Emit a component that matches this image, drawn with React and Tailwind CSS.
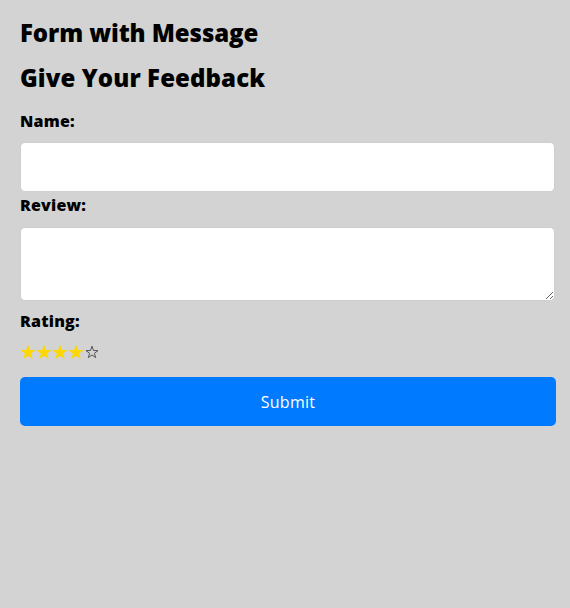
import React from "react";

function Star({ filled }) {
  if (filled) {
    return (
      <svg width="16" height="16" viewBox="0 0 16 16" className="block">
        <polygon
          points="8,0.6 9.9,6 15.6,6.1 11,9.5 12.7,15 8,11.7 3.3,15 5,9.5 0.4,6.1 6.1,6"
          fill="#FFD700"
        />
      </svg>
    );
  }
  return (
    <svg width="16" height="16" viewBox="0 0 16 16" className="block">
      <polygon
        points="8,2.2 9.5,6.5 14,6.6 10.4,9.3 11.7,13.6 8,11 4.3,13.6 5.6,9.3 2,6.6 6.5,6.5"
        fill="none"
        stroke="#555"
        strokeWidth="1"
        strokeLinejoin="round"
      />
    </svg>
  );
}

export default function App() {
  return (
    <div
      className="min-h-[608px] w-[570px] bg-[#d3d3d3] px-[20px] pt-[15px] text-black"
      style={{ fontFamily: '"Open Sans", "Noto Sans", sans-serif' }}
    >
      <h1 className="h-[36px] text-[24px] font-extrabold leading-[36px] tracking-[-0.1px]">
        Form with Message
      </h1>
      <h2 className="mt-[9px] h-[36px] text-[24px] font-extrabold leading-[36px] tracking-[0.1px]">
        Give Your Feedback
      </h2>
      <label className="mt-[13px] block h-[24px] text-[16px] font-extrabold leading-[24px] tracking-[0.2px]">
        Name:
      </label>
      <input
        type="text"
        className="mt-[9px] block h-[50px] w-[535px] rounded-[5px] border border-[#cfcfcf] bg-white px-2 outline-none"
      />
      <label className="mt-[1px] block h-[24px] text-[16px] font-extrabold leading-[24px] tracking-[0.2px]">
        Review:
      </label>
      <textarea className="mt-[10px] block h-[74px] w-[535px] resize-y rounded-[5px] border border-[#cfcfcf] bg-white px-2 outline-none" />
      <label className="mt-[8px] block h-[24px] text-[16px] font-extrabold leading-[24px] tracking-[0.2px]">
        Rating:
      </label>
      <div className="mt-[7px] flex h-[24px] items-center">
        <Star filled />
        <Star filled />
        <Star filled />
        <Star filled />
        <Star />
      </div>
      <button
        type="button"
        className="mt-[13px] block h-[49px] w-[536px] rounded-[5px] bg-[#007bff] text-[16px] font-normal tracking-[0.3px] text-white"
      >
        Submit
      </button>
    </div>
  );
}
